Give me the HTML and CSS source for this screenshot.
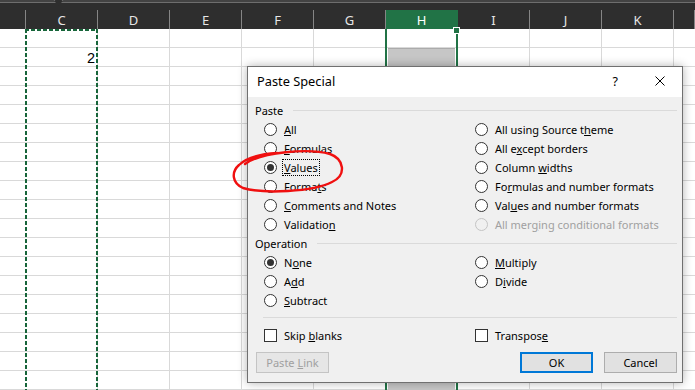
FILE: index.html
```html
<!DOCTYPE HTML>
<html lang="en">

<head>
    <title>Paste Special</title>
    <link rel="stylesheet" href="styles.css">
</head>

<body>
    <div class="sheet">
        <div class="topband"><span class="notch"></span></div>

        <div class="colbar">
            <div class="col"></div>
            <div class="col">C</div>
            <div class="col">D</div>
            <div class="col">E</div>
            <div class="col">F</div>
            <div class="col">G</div>
            <div class="col col-active">H</div>
            <div class="col">I</div>
            <div class="col">J</div>
            <div class="col">K</div>
            <div class="col"></div>
        </div>

        <div class="cells">
            <div class="copy-range"></div>
            <div class="value">2</div>
            <div class="selection">
                <span class="handle"></span>
                <div class="sel-fill"></div>
            </div>
        </div>

        <div class="dialog">
            <div class="titlebar">
                <span class="title">Paste Special</span>
                <span class="help">?</span>
                <svg class="close" width="10" height="10" viewBox="0 0 10 10">
                    <path d="M0.5 0.5 L9.5 9.5 M9.5 0.5 L0.5 9.5" stroke="#000" stroke-width="1" fill="none" />
                </svg>
            </div>

            <div class="dlg-body">
                <div class="group-title">Paste</div>
                <div class="options">
                    <label class="opt"><span class="radio"></span><span><u>A</u>ll</span></label>
                    <label class="opt"><span class="radio"></span><span>All using Source t<u>h</u>eme</span></label>
                    <label class="opt"><span class="radio"></span><span><u>F</u>ormulas</span></label>
                    <label class="opt"><span class="radio"></span><span>All e<u>x</u>cept borders</span></label>
                    <label class="opt"><span class="radio on"></span><span class="focus"><u>V</u>alues</span></label>
                    <label class="opt"><span class="radio"></span><span>Column <u>w</u>idths</span></label>
                    <label class="opt"><span class="radio"></span><span>Forma<u>t</u>s</span></label>
                    <label class="opt"><span class="radio"></span><span>Fo<u>r</u>mulas and number formats</span></label>
                    <label class="opt"><span class="radio"></span><span><u>C</u>omments and Notes</span></label>
                    <label class="opt"><span class="radio"></span><span>Val<u>u</u>es and number formats</span></label>
                    <label class="opt"><span class="radio"></span><span>Validatio<u>n</u></span></label>
                    <label class="opt disabled"><span class="radio"></span><span>All mer<u>g</u>ing conditional formats</span></label>
                </div>

                <div class="group-title">Operation</div>
                <div class="options">
                    <label class="opt"><span class="radio on"></span><span>N<u>o</u>ne</span></label>
                    <label class="opt"><span class="radio"></span><span><u>M</u>ultiply</span></label>
                    <label class="opt"><span class="radio"></span><span>A<u>d</u>d</span></label>
                    <label class="opt"><span class="radio"></span><span>D<u>i</u>vide</span></label>
                    <label class="opt"><span class="radio"></span><span><u>S</u>ubtract</span></label>
                </div>

                <div class="sep"></div>

                <div class="options">
                    <label class="opt"><span class="check"></span><span>Skip <u>b</u>lanks</span></label>
                    <label class="opt"><span class="check"></span><span>Transpos<u>e</u></span></label>
                </div>

                <div class="buttons">
                    <button class="btn" disabled>Paste <u>L</u>ink</button>
                    <span class="spacer"></span>
                    <button class="btn btn-default">OK</button>
                    <button class="btn">Cancel</button>
                </div>
            </div>

            <svg class="scribble" width="120" height="50" viewBox="0 0 120 50">
                <path d="M14 18 C30 6, 78 2, 99 8 C113 13, 116 29, 101 36 C82 46, 32 48, 12 42 C1 37, 0 26, 8 19 C16 11, 30 8, 46 7"
                    stroke="#f01010" stroke-width="2.4" fill="none" stroke-linecap="round" />
            </svg>
        </div>
    </div>
</body>

</html>
```

FILE: styles.css
```css
body {
    margin: 0;
    background: #fff;
    font-family: "Noto Sans", sans-serif;
    overflow: hidden;
}

.sheet {
    position: relative;
    width: 695px;
    height: 390px;
    overflow: hidden;
}

/* ---- column header ---- */

.topband {
    position: relative;
    height: 2px;
    background: #434343;
    border-bottom: 1px solid #6e6e6e;
}

.notch {
    position: absolute;
    left: 55px;
    top: -3px;
    width: 6px;
    height: 6px;
    background: #2e2e2e;
    border-left: 1px solid #6e6e6e;
    border-top: 1px solid #6e6e6e;
    transform: rotate(45deg);
}

.colbar {
    display: grid;
    grid-template-columns: 26px repeat(9, 72px) 21px;
    height: 26px;
    background: #2e2e2e;
}

.col {
    box-sizing: border-box;
    margin-top: 7px;
    height: 19px;
    border-right: 1px solid #858585;
    color: #e6e6e6;
    font-size: 13px;
    line-height: 20px;
    text-align: center;
}

.col-active {
    background: #217346;
    color: #fff;
    border-right-color: #217346;
}

/* ---- cells ---- */

.cells {
    display: grid;
    grid-template-columns: 26px repeat(9, 72px) 21px;
    grid-template-rows: repeat(19, 19px);
    background-image:
        repeating-linear-gradient(to bottom, transparent 0 18px, #d9d9d9 18px 19px),
        repeating-linear-gradient(to right, transparent 0 71px, #d9d9d9 71px 72px);
    background-position: 0 0, 26px 0;
}

.copy-range {
    grid-column: 2;
    grid-row: 1 / -1;
    margin-left: -1px;
    background:
        repeating-linear-gradient(to bottom, #17653a 0 4px, transparent 4px 6px) left top / 2px 100% no-repeat,
        repeating-linear-gradient(to bottom, #17653a 0 4px, transparent 4px 6px) right top / 2px 100% no-repeat,
        repeating-linear-gradient(to right, #17653a 0 4px, transparent 4px 6px) left top / 100% 2px no-repeat;
}

.value {
    grid-column: 2;
    grid-row: 2;
    padding-right: 3px;
    font-family: "Liberation Sans", sans-serif;
    font-size: 14.5px;
    line-height: 20px;
    text-align: right;
    color: #000;
}

.selection {
    position: relative;
    grid-column: 7;
    grid-row: 1 / -1;
    margin-left: -1px;
    display: flex;
    flex-direction: column;
    border-left: 2px solid #217346;
    border-right: 2px solid #217346;
}

.handle {
    position: absolute;
    right: -4px;
    top: -2px;
    width: 5px;
    height: 5px;
    background: #217346;
    border: 1px solid #fff;
}

.sel-fill {
    flex: 1;
    margin: 19px 1px 0 1px;
    background: repeating-linear-gradient(to bottom, #ababab 0 1px, #c6c6c6 1px 19px);
}

/* ---- dialog ---- */

.dialog {
    position: absolute;
    left: 247px;
    top: 66px;
    width: 434px;
    height: 315px;
    background: #f0f0f0;
    border: 1px solid #707070;
    box-shadow: 0 0 9px rgba(0, 0, 0, 0.3);
    font-size: 11px;
    color: #000;
}

.titlebar {
    display: flex;
    align-items: center;
    height: 28px;
    padding: 0 17px 2px 9px;
    background: #fff;
}

.title {
    flex: 1;
    font-size: 12.8px;
}

.help {
    font-size: 12.5px;
    margin-right: 37px;
}

.dlg-body {
    padding: 4px 5px 0 7px;
}

.group-title {
    display: flex;
    align-items: center;
    height: 19px;
}

.group-title:after {
    content: '';
    flex: 1;
    margin-left: 10px;
    border-top: 1px solid #dadada;
}

.options {
    display: grid;
    grid-template-columns: 211px 1fr;
    grid-auto-rows: 19px;
    padding-left: 9px;
}

.opt {
    display: flex;
    align-items: center;
    gap: 7px;
    white-space: nowrap;
}

.radio {
    box-sizing: border-box;
    flex: none;
    width: 13px;
    height: 13px;
    border: 1px solid #333;
    border-radius: 50%;
    background: #fff;
    position: relative;
}

.radio.on:after {
    content: '';
    position: absolute;
    left: 2px;
    top: 2px;
    width: 7px;
    height: 7px;
    border-radius: 50%;
    background: #333;
}

.disabled {
    color: #a0a0a0;
}

.disabled .radio {
    border-color: #c4c4c4;
    background: #f0f0f0;
}

.focus {
    outline: 1px dotted #000;
    outline-offset: 0;
    padding: 0 1px;
    margin-left: -1px;
}

.check {
    box-sizing: border-box;
    flex: none;
    width: 13px;
    height: 13px;
    border: 1px solid #333;
    background: #fff;
}

.sep {
    margin: 7px 0 8px 8px;
    border-top: 1px solid #dadada;
}

.buttons {
    display: flex;
    gap: 11px;
    margin-top: 7px;
    padding-left: 1px;
}

.spacer {
    flex: 1;
}

.btn {
    box-sizing: border-box;
    width: 73px;
    height: 21px;
    padding: 0;
    border: 1px solid #adadad;
    background: #e1e1e1;
    font-family: "Noto Sans", sans-serif;
    font-size: 11px;
    color: #000;
}

.btn:disabled {
    border-color: #c4c4c4;
    background: #e6e6e6;
    color: #a0a0a0;
}

.btn-default {
    border: 2px solid #0078d7;
}

.scribble {
    position: absolute;
    left: -17px;
    top: 79px;
}
```
